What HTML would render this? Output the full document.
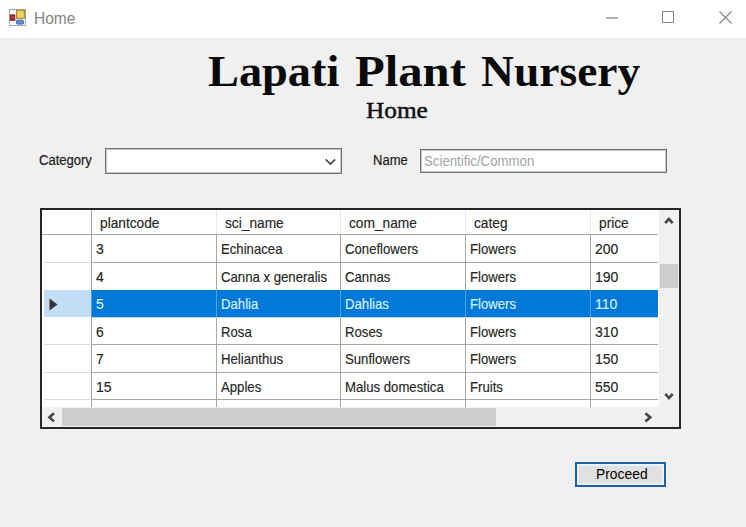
<!DOCTYPE html>
<html><head><meta charset="utf-8">
<style>
*{box-sizing:border-box;margin:0;padding:0}
html,body{width:746px;height:527px;overflow:hidden;background:#f0f0f0;font-family:"Liberation Sans",sans-serif}
.a{position:absolute}
.t{position:absolute;white-space:nowrap;line-height:1;transform-origin:0 0}
.ui{font-size:14px;color:#1a1a1a;-webkit-text-stroke:0.2px currentColor;transform:translateY(0.3px) scale(0.93,1.06)}
.cell{position:absolute;font-size:14px;color:#262626;-webkit-text-stroke:0.15px currentColor;line-height:1;white-space:nowrap;transform-origin:0 0;transform:scaleX(0.94)}
.sel{color:#d8f2ff}
.ttl{position:absolute;white-space:nowrap;line-height:1;transform-origin:0 0;font-family:'Liberation Serif',serif;font-weight:bold;font-size:45px;color:#0a0a0a}
</style></head><body>
<div class="a" style="left:0;top:0;width:746px;height:38px;background:#fff">
  <svg class="a" style="left:9px;top:9px" width="17" height="17" viewBox="0 0 17 17">
    <rect x="0.5" y="0.5" width="16" height="16" fill="#fbfbfb" stroke="#a8a8a8"/>
    <rect x="7.6" y="1.2" width="7.8" height="8.1" fill="#f2d25e" stroke="#a8861e" stroke-width="1.1"/>
    <rect x="1.5" y="6" width="4.2" height="5.2" fill="#b8383e" stroke="#7c1820" stroke-width="1.1"/>
    <rect x="7.4" y="11.2" width="7.1" height="3.8" rx="1" fill="#5e92dc" stroke="#3a66b0" stroke-width="1"/>
  </svg>
  <div class="t" style="left:34px;top:10px;font-size:15.5px;color:#848484;transform:translateY(-0.3px) scale(1,1.08)">Home</div>
  <div class="a" style="left:606px;top:17px;width:12px;height:2px;background:#b4b4b4"></div>
  <div class="a" style="left:662px;top:11px;width:12px;height:12px;border:1px solid #888"></div>
  <svg class="a" style="left:718px;top:10px" width="15" height="15" viewBox="0 0 15 15"><path d="M1.5 1.5 L13.5 13.5 M13.5 1.5 L1.5 13.5" stroke="#888" stroke-width="1.2" fill="none"/></svg>
</div>

<div class="ttl" style="left:208px;top:49px;transform:scaleX(1.03)">Lapati</div>
<div class="ttl" style="left:355px;top:49px;transform:scaleX(1.082)">Plant</div>
<div class="ttl" style="left:481px;top:49px;transform:scaleX(1.012)">Nursery</div>
<div class="t" style="left:366px;top:99px;font-family:'Liberation Serif',serif;font-size:23px;color:#111;-webkit-text-stroke:0.5px #111;transform:scaleX(1.1)">Home</div>

<div class="t ui" style="left:39px;top:152px">Category</div>
<div class="a" style="left:105px;top:148px;width:237px;height:26px;background:#fff;border:1px solid #727272;box-shadow:inset 0 0 0 1px #c6c6c6"></div>
<svg class="a" style="left:324px;top:157px" width="13" height="9" viewBox="0 0 13 9"><path d="M1.7 2.4 L6.4 7 L11.1 2.4" stroke="#4a4a4a" stroke-width="1.7" fill="none"/></svg>

<div class="t ui" style="left:373px;top:152px">Name</div>
<div class="a" style="left:420px;top:149px;width:247px;height:24px;background:#fff;border:1px solid #727272;box-shadow:inset 0 0 0 1px #c6c6c6"></div>
<div class="t" style="left:424px;top:154px;font-size:14px;color:#a4a4a4;transform:translateY(-0.6px) scale(0.945,1.06)">Scientific/Common</div>

<!-- grid -->
<div class="a" style="left:40px;top:208px;width:641px;height:221px;background:#fff;border:2px solid #262626"></div>
<div class="a" style="left:44px;top:290px;width:47px;height:27px;background:#c2ddf4"></div>
<div class="a" style="left:92px;top:290px;width:566px;height:27px;background:#0078d7"></div>
<div class="a" style="left:216px;top:210px;width:1px;height:24px;background:#e8e8e8"></div>
<div class="a" style="left:340px;top:210px;width:1px;height:24px;background:#e8e8e8"></div>
<div class="a" style="left:465px;top:210px;width:1px;height:24px;background:#e8e8e8"></div>
<div class="a" style="left:590px;top:210px;width:1px;height:24px;background:#e8e8e8"></div>
<div class="a" style="left:91px;top:210px;width:1px;height:80px;background:#a8a8a8"></div>
<div class="a" style="left:91px;top:317px;width:1px;height:90px;background:#a8a8a8"></div>
<div class="a" style="left:91px;top:290px;width:1px;height:27px;background:#5a9ee0"></div>
<div class="a" style="left:216px;top:234px;width:1px;height:173px;background:#a8a8a8"></div>
<div class="a" style="left:340px;top:234px;width:1px;height:173px;background:#a8a8a8"></div>
<div class="a" style="left:465px;top:234px;width:1px;height:173px;background:#a8a8a8"></div>
<div class="a" style="left:590px;top:234px;width:1px;height:173px;background:#a8a8a8"></div>
<div class="a" style="left:216px;top:290px;width:1px;height:27px;background:#4aa3ea"></div>
<div class="a" style="left:340px;top:290px;width:1px;height:27px;background:#4aa3ea"></div>
<div class="a" style="left:465px;top:290px;width:1px;height:27px;background:#4aa3ea"></div>
<div class="a" style="left:590px;top:290px;width:1px;height:27px;background:#4aa3ea"></div>
<div class="a" style="left:42px;top:234px;width:616px;height:1px;background:#a8a8a8"></div>
<div class="a" style="left:92px;top:262px;width:566px;height:1px;background:#a8a8a8"></div>
<div class="a" style="left:44px;top:262px;width:46px;height:1px;background:#dadada"></div>
<div class="a" style="left:92px;top:317px;width:566px;height:1px;background:#c8d4de"></div>
<div class="a" style="left:92px;top:344px;width:566px;height:1px;background:#a8a8a8"></div>
<div class="a" style="left:44px;top:344px;width:46px;height:1px;background:#dadada"></div>
<div class="a" style="left:92px;top:372px;width:566px;height:1px;background:#a8a8a8"></div>
<div class="a" style="left:44px;top:372px;width:46px;height:1px;background:#dadada"></div>
<div class="a" style="left:92px;top:399px;width:566px;height:1px;background:#a8a8a8"></div>
<div class="a" style="left:44px;top:399px;width:46px;height:1px;background:#dadada"></div>
<div class="cell" style="left:100px;top:216px;transform:scale(0.98,1.0)">plantcode</div>
<div class="cell" style="left:225px;top:216px;transform:scale(0.98,1.0)">sci_name</div>
<div class="cell" style="left:349px;top:216px;transform:scale(0.98,1.0)">com_name</div>
<div class="cell" style="left:474px;top:216px;transform:scale(0.98,1.0)">categ</div>
<div class="cell" style="left:599px;top:216px;transform:scale(0.98,1.0)">price</div>
<div class="cell" style="left:96px;top:241px;transform:translateY(0.4px) scale(1.0,1.08)">3</div>
<div class="cell" style="left:221px;top:241px;transform:translateY(0.4px) scale(0.94,1.08)">Echinacea</div>
<div class="cell" style="left:345px;top:241px;transform:translateY(0.4px) scale(0.94,1.08)">Coneflowers</div>
<div class="cell" style="left:470px;top:241px;transform:translateY(0.4px) scale(0.94,1.08)">Flowers</div>
<div class="cell" style="left:595px;top:241px;transform:translateY(0.4px) scale(1.0,1.08)">200</div>
<div class="cell" style="left:96px;top:269px;transform:translateY(0.4px) scale(1.0,1.08)">4</div>
<div class="cell" style="left:221px;top:269px;transform:translateY(0.4px) scale(0.94,1.08)">Canna x generalis</div>
<div class="cell" style="left:345px;top:269px;transform:translateY(0.4px) scale(0.94,1.08)">Cannas</div>
<div class="cell" style="left:470px;top:269px;transform:translateY(0.4px) scale(0.94,1.08)">Flowers</div>
<div class="cell" style="left:595px;top:269px;transform:translateY(0.4px) scale(1.0,1.08)">190</div>
<div class="cell sel" style="left:96px;top:296px;transform:translateY(0.4px) scale(1.0,1.08)">5</div>
<div class="cell sel" style="left:221px;top:296px;transform:translateY(0.4px) scale(0.94,1.08)">Dahlia</div>
<div class="cell sel" style="left:345px;top:296px;transform:translateY(0.4px) scale(0.94,1.08)">Dahlias</div>
<div class="cell sel" style="left:470px;top:296px;transform:translateY(0.4px) scale(0.94,1.08)">Flowers</div>
<div class="cell sel" style="left:595px;top:296px;transform:translateY(0.4px) scale(1.0,1.08)">110</div>
<div class="cell" style="left:96px;top:324px;transform:translateY(0.4px) scale(1.0,1.08)">6</div>
<div class="cell" style="left:221px;top:324px;transform:translateY(0.4px) scale(0.94,1.08)">Rosa</div>
<div class="cell" style="left:345px;top:324px;transform:translateY(0.4px) scale(0.94,1.08)">Roses</div>
<div class="cell" style="left:470px;top:324px;transform:translateY(0.4px) scale(0.94,1.08)">Flowers</div>
<div class="cell" style="left:595px;top:324px;transform:translateY(0.4px) scale(1.0,1.08)">310</div>
<div class="cell" style="left:96px;top:351px;transform:translateY(0.4px) scale(1.0,1.08)">7</div>
<div class="cell" style="left:221px;top:351px;transform:translateY(0.4px) scale(0.94,1.08)">Helianthus</div>
<div class="cell" style="left:345px;top:351px;transform:translateY(0.4px) scale(0.94,1.08)">Sunflowers</div>
<div class="cell" style="left:470px;top:351px;transform:translateY(0.4px) scale(0.94,1.08)">Flowers</div>
<div class="cell" style="left:595px;top:351px;transform:translateY(0.4px) scale(1.0,1.08)">150</div>
<div class="cell" style="left:96px;top:379px;transform:translateY(0.4px) scale(1.0,1.08)">15</div>
<div class="cell" style="left:221px;top:379px;transform:translateY(0.4px) scale(0.94,1.08)">Apples</div>
<div class="cell" style="left:345px;top:379px;transform:translateY(0.4px) scale(0.94,1.08)">Malus domestica</div>
<div class="cell" style="left:470px;top:379px;transform:translateY(0.4px) scale(0.94,1.08)">Fruits</div>
<div class="cell" style="left:595px;top:379px;transform:translateY(0.4px) scale(1.0,1.08)">550</div>
<svg class="a" style="left:49px;top:298px" width="9" height="13" viewBox="0 0 9 13"><path d="M0.5 0.5 L8.5 6.5 L0.5 12.5Z" fill="#333"/></svg>
<div class="a" style="left:659px;top:210px;width:20px;height:217px;background:#f0f0f0"></div>
<div class="a" style="left:660px;top:264px;width:18px;height:24px;background:#cdcdcd"></div>
<svg class="a" style="left:660px;top:214px" width="18" height="14" viewBox="0 0 18 14"><path d="M5.2 9.2 L8.9 5 L12.6 9.2" stroke="#444" stroke-width="2.6" fill="none"/></svg>
<svg class="a" style="left:660px;top:390px" width="18" height="14" viewBox="0 0 18 14"><path d="M5.3 3.9 L9 8.1 L12.7 3.9" stroke="#444" stroke-width="2.6" fill="none"/></svg>
<div class="a" style="left:42px;top:407px;width:617px;height:20px;background:#f0f0f0"></div>
<div class="a" style="left:62px;top:408px;width:434px;height:18px;background:#cdcdcd"></div>
<svg class="a" style="left:44px;top:409px" width="14" height="17" viewBox="0 0 14 17"><path d="M10 4.2 L5.4 8.3 L10 12.4" stroke="#444" stroke-width="2.6" fill="none"/></svg>
<svg class="a" style="left:641px;top:409px" width="14" height="17" viewBox="0 0 14 17"><path d="M4.4 4.2 L9.2 8.3 L4.4 12.4" stroke="#444" stroke-width="2.6" fill="none"/></svg>
<!-- /grid -->

<div class="a" style="left:575px;top:462px;width:91px;height:25px;border:2px solid #2060a8;background:#e1e1e1;box-shadow:inset 0 0 0 2px #e8f3fc"></div>
<div class="t" style="left:596px;top:467px;font-size:14px;color:#000;transform:scale(0.99,1.04)">Proceed</div>
</body></html>
